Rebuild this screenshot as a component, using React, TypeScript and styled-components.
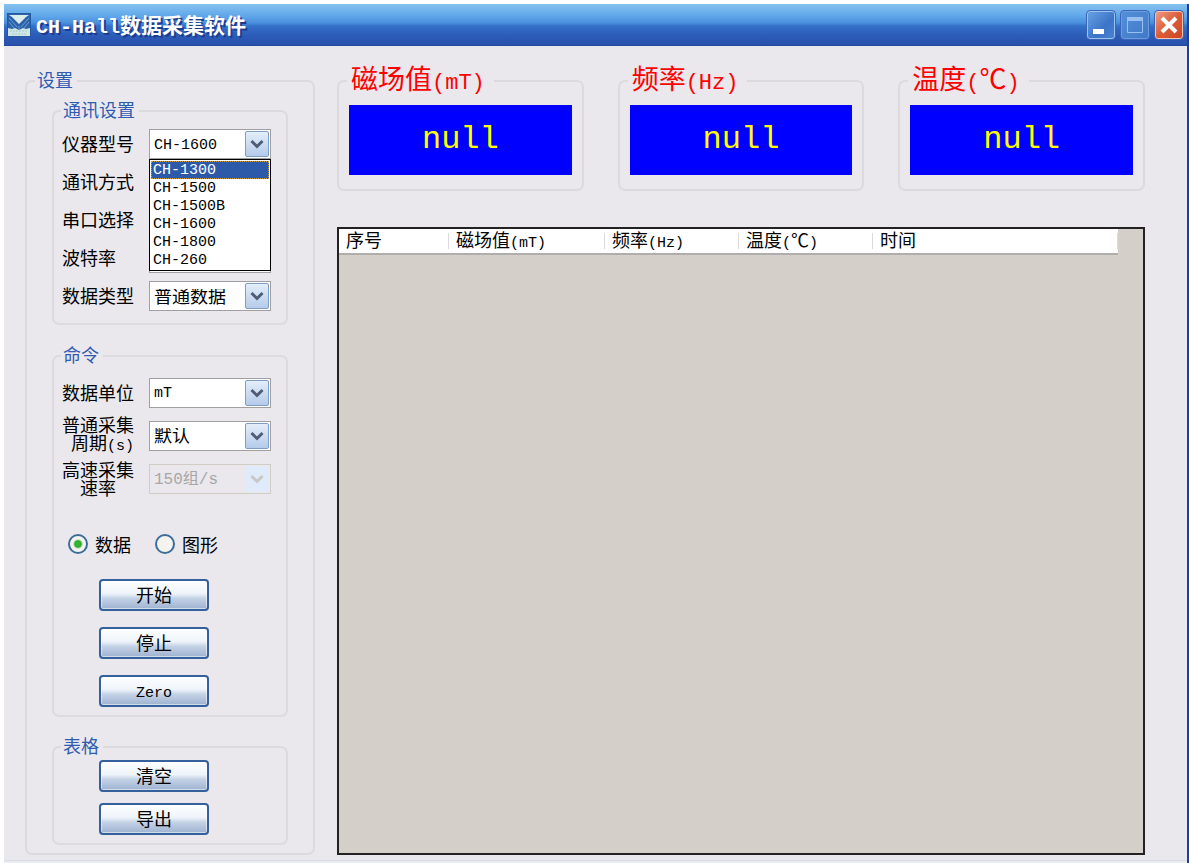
import React, { Fragment, ReactNode, useState } from "react";
import styled, { createGlobalStyle, css } from "styled-components";

const GlobalStyle = createGlobalStyle`
  *, *::before, *::after { box-sizing: border-box; }
  body {
    margin: 0;
    background: #fff;
    color: #000;
    font: 18px/18px "Noto Sans CJK SC", sans-serif;
  }
  button, select, input { font: inherit; color: inherit; margin: 0; }
`;

const mono = css`
  font-family: "Liberation Mono", "Noto Sans CJK SC", monospace;
`;

const Latin = styled.span<{ $size: number }>`
  ${mono}
  font-size: ${(p) => p.$size}px;
  line-height: 1;
`;

/* Chinese text with its ASCII parts set in half-width monospace. */
function Mixed({ text, latin = 15 }: { text: string; latin?: number }) {
  const parts = text.split(/([\x20-\x7e]+)/).filter(Boolean);
  return (
    <>
      {parts.map((part, i) =>
        /^[\x20-\x7e]/.test(part) ? (
          <Latin key={i} $size={latin}>{part}</Latin>
        ) : (
          <Fragment key={i}>{part}</Fragment>
        )
      )}
    </>
  );
}

const Window = styled.div`
  display: flex;
  flex-direction: column;
  min-height: 100vh;
  padding: 4px 0 0 4px;
`;

const Frame = styled.div`
  flex: 1;
  display: flex;
  flex-direction: column;
  border-right: 2px solid #1f3f9c;
  background: #eae8ed;
`;

const TitleBar = styled.header`
  display: flex;
  align-items: center;
  gap: 5px;
  height: 42px;
  padding: 0 3px 0 3px;
  border-bottom: 1px solid #2348a0;
  background: linear-gradient(#86c4ef 0%, #5ea5ea 30%, #4a8fdc 46%, #3470c8 54%, #2c5db8 75%, #2850ac 100%);
`;

const Title = styled.h1`
  flex: 1;
  margin: 0;
  color: #fff;
  font-size: 21px;
  line-height: 24px;
  font-weight: 700;
  text-shadow: 2px 2px 0 #1c3c90;
`;

const Controls = styled.div`
  display: flex;
  gap: 4px;
`;

const ControlButton = styled.button<{ $kind: "plain" | "dim" | "close" }>`
  display: grid;
  place-items: center;
  width: 30px;
  height: 30px;
  padding: 0;
  border: 1px solid #3a66bc;
  border-radius: 4px;
  box-shadow: inset 0 0 0 1px ${(p) =>
    p.$kind === "close" ? "#f4c4b8" : p.$kind === "dim" ? "#6c9cdc" : "#9cc0ec"};
  background: ${(p) =>
    p.$kind === "close"
      ? "linear-gradient(135deg, #eea08c, #dc5c38 50%, #cc4420)"
      : p.$kind === "dim"
      ? "linear-gradient(135deg, #5490d8, #4078c8)"
      : "linear-gradient(135deg, #6aa4e4, #3c74c8 60%, #4c84d0)"};
`;

const Content = styled.main`
  flex: 1;
  display: flex;
  gap: 22px;
  padding: 16px 42px 5px 21px;
`;

const Status = styled.footer`
  height: 4px;
  border-top: 1px solid #d8dde4;
  background: #e9edf2;
`;

const Group = styled.fieldset`
  min-width: 0;
  margin: 0;
  padding: 0 26px 0 26px;
  border: 2px solid #dcdadc;
  border-radius: 7px;
`;

const GroupTitle = styled.legend`
  padding: 0 4px 4px 2px;
  color: #2f5cb0;
  line-height: 18px;
`;

const Sidebar = styled(Group)`
  flex: none;
  width: 290px;
  margin-top: 8px;
  padding: 0 25px 8px 25px;

  & > ${GroupTitle} { margin-left: -17px; }
`;

const Section = styled(Group)<{ $gap: number }>`
  padding: 0 15px 8px 8px;
  margin-top: ${(p) => p.$gap}px;

  & > ${GroupTitle} { margin-left: -1px; }
`;

const Fields = styled.div<{ $row: number; $top: number }>`
  display: grid;
  grid-auto-rows: ${(p) => p.$row}px;
  padding-top: ${(p) => p.$top}px;
`;

const Field = styled.div`
  display: grid;
  grid-template-columns: 72px 1fr;
  gap: 15px;
  align-items: center;
`;

const FieldLabel = styled.label`
  padding-bottom: 2px;
  text-align: center;
  white-space: pre;
`;

const LeftLabel = styled(FieldLabel)`
  text-align: left;
`;

const SelectBox = styled.div`
  position: relative;
`;

const SelectInput = styled.select<{ $size: number }>`
  ${mono}
  display: block;
  width: 100%;
  height: 30px;
  padding: 3px 28px 0 4px;
  border: 1px solid #a0a0a4;
  border-radius: 0;
  outline: 0;
  background: #fff;
  font-size: ${(p) => p.$size}px;
  appearance: none;

  &:disabled {
    border-color: #d0cec4;
    background: #eae8ed;
    color: #a8a6a6;
    opacity: 1;
  }
`;

const ArrowBox = styled.span<{ $off?: boolean }>`
  position: absolute;
  top: 2px;
  right: 2px;
  display: grid;
  place-items: center;
  width: 24px;
  height: 26px;
  border: 1px solid ${(p) => (p.$off ? "#e4ebf5" : "#7f9ec4")};
  border-radius: 2px;
  background: ${(p) => (p.$off ? "#dfeafa" : "linear-gradient(#e4eefb, #b4cbea)")};
  pointer-events: none;
`;

const Options = styled.ul`
  ${mono}
  position: absolute;
  z-index: 2;
  top: 30px;
  left: 0;
  right: 0;
  margin: 0;
  padding: 1px;
  border: 1px solid #000;
  background: #fff;
  font-size: 15px;
  list-style: none;
`;

const Option = styled.li<{ $active: boolean }>`
  height: 18px;
  padding: 2px 2px 0;
  line-height: 16px;
  ${(p) =>
    p.$active &&
    css`
      background: #2c5aa8;
      color: #fff;
      outline: 1px dotted #d0a040;
      outline-offset: -1px;
    `}
`;

const Radios = styled.div`
  display: flex;
  gap: 24px;
  padding: 34px 0 25px 6px;
`;

const RadioLabel = styled.label`
  display: flex;
  align-items: center;
  gap: 7px;
`;

const RadioInput = styled.input`
  width: 20px;
  height: 20px;
  border: 2px solid #3c6c98;
  border-radius: 50%;
  background: #f4f3f0;
  appearance: none;

  &:checked {
    background: radial-gradient(circle, #30b830 0 2px, #28a828 3px, #f4f3f0 5px);
  }
`;

const Buttons = styled.div<{ $gap: number; $top?: number }>`
  display: flex;
  flex-direction: column;
  gap: ${(p) => p.$gap}px;
  padding: ${(p) => p.$top ?? 0}px 0 0 37px;
`;

const PushButton = styled.button`
  width: 110px;
  height: 32px;
  padding: 0 0 3px;
  border: 2px solid #34609c;
  border-radius: 4px;
  background: linear-gradient(#fdfeff 0%, #eef4fa 45%, #c4d2e6 62%, #9eb2d0 100%);
  box-shadow: inset 0 0 0 1px #ffffff80;
  line-height: 20px;
`;

const Work = styled.div`
  flex: 1;
  min-width: 0;
  display: flex;
  flex-direction: column;
  gap: 36px;
`;

const Readouts = styled.div`
  display: grid;
  grid-template-columns: repeat(3, 1fr);
  gap: 34px;
`;

const Readout = styled(Group)`
  padding: 6px 10px 14px 10px;
`;

const ReadoutTitle = styled.legend`
  margin-left: -2px;
  padding: 0 9px 4px 4px;
  color: #f00;
  font-size: 27px;
  line-height: 32px;
`;

const Value = styled.output`
  ${mono}
  display: block;
  background: #00f;
  color: #ff0;
  font-size: 32px;
  line-height: 70px;
  text-align: center;
`;

const ListPanel = styled.div`
  flex: 1;
  border: 2px solid #222;
  background: #d4cfc8;
`;

const Table = styled.table`
  width: calc(100% - 25px);
  border-collapse: separate;
  border-spacing: 0;
  border-bottom: 2px solid #b0aeac;
  background: #fff;
  table-layout: fixed;
`;

const HeadCell = styled.th<{ $width?: number }>`
  width: ${(p) => (p.$width ? `${p.$width}px` : "auto")};
  height: 23px;
  padding: 0 0 2px 7px;
  background: linear-gradient(#dcdadc, #dcdadc) right center / 1px 16px no-repeat;
  font-weight: 400;
  text-align: left;
  vertical-align: baseline;
  line-height: 21px;
  white-space: nowrap;
`;

function Logo() {
  return (
    <svg width="24" height="24" viewBox="0 0 24 24" aria-hidden="true">
      <rect x="0.5" y="0.5" width="23" height="23" fill="#2c62ac" stroke="#2458a0" />
      <path d="M2 2h20l-3 2-7 7-7-7z" fill="#dcecec" />
      <path d="M1 15l4 1 3-1 4 2 4-2 3 1 4-1v8H1z" fill="#cfe6e4" />
      <path d="M2 5l8 9M2 9l5 6M22 5l-8 9M22 9l-5 6M12 13v4" stroke="#6ca0cc" />
      <path d="M3 18h18M5 21h14" stroke="#a4ccd0" strokeDasharray="2 1" />
    </svg>
  );
}

function Arrow({ off }: { off?: boolean }) {
  return (
    <ArrowBox $off={off}>
      <svg width="14" height="10" viewBox="0 0 14 10" aria-hidden="true">
        <path d="M1.500 2l5.500 5.500L12.500 2" fill="none" stroke={off ? "#c8c8c4" : "#505c74"} strokeWidth="3" />
      </svg>
    </ArrowBox>
  );
}

type FieldProps = {
  id: string;
  label: string;
  options: string[];
  value?: string;
  size?: number;
  off?: boolean;
  left?: boolean;
  children?: ReactNode;
};

function SelectField({ id, label, options, value, size = 15, off, left, children }: FieldProps) {
  const Label = left ? LeftLabel : FieldLabel;
  return (
    <Field>
      <Label htmlFor={id}><Mixed text={label} /></Label>
      <SelectBox>
        <SelectInput id={id} $size={size} disabled={off} defaultValue={value ?? options[0]}>
          {options.map((o) => <option key={o}>{o}</option>)}
        </SelectInput>
        <Arrow off={off} />
        {children}
      </SelectBox>
    </Field>
  );
}

const models = ["CH-1300", "CH-1500", "CH-1500B", "CH-1600", "CH-1800", "CH-260"];
const readouts = ["磁场值(mT)", "频率(Hz)", "温度(℃)"];
const columns: { name: string; width?: number }[] = [
  { name: "序号", width: 110 },
  { name: "磁场值(mT)", width: 156 },
  { name: "频率(Hz)", width: 134 },
  { name: "温度(℃)", width: 134 },
  { name: "时间" },
];

export default function App() {
  const [view, setView] = useState("数据");

  return (
    <Window>
      <GlobalStyle />
      <Frame>
        <TitleBar>
          <Logo />
          <Title><Mixed text="CH-Hall数据采集软件" latin={20} /></Title>
          <Controls>
            <ControlButton $kind="plain" aria-label="最小化">
              <svg width="20" height="20" aria-hidden="true"><path d="M2 14h11v5H2z" fill="#fff" /></svg>
            </ControlButton>
            <ControlButton $kind="dim" aria-label="最大化">
              <svg width="20" height="20" aria-hidden="true">
                <path d="M2.500 2.500h15v15h-15z" fill="none" stroke="#98c0ee" />
                <path d="M2 2h16v4H2z" fill="#98c0ee" />
              </svg>
            </ControlButton>
            <ControlButton $kind="close" aria-label="关闭">
              <svg width="20" height="20" aria-hidden="true">
                <path d="M3 3l14 14M17 3L3 17" stroke="#fff" strokeWidth="4" />
              </svg>
            </ControlButton>
          </Controls>
        </TitleBar>

        <Content>
          <Sidebar>
            <GroupTitle>设置</GroupTitle>

            <Section $gap={8}>
              <GroupTitle>通讯设置</GroupTitle>
              <Fields $row={38} $top={3}>
                <SelectField id="model" label="仪器型号" options={models} value="CH-1600" left>
                  <Options role="listbox" aria-label="仪器型号">
                    {models.map((m, i) => (
                      <Option key={m} role="option" aria-selected={i === 0} $active={i === 0}>{m}</Option>
                    ))}
                  </Options>
                </SelectField>
                <SelectField id="link" label="通讯方式" options={[""]} left />
                <SelectField id="port" label="串口选择" options={[""]} left />
                <SelectField id="baud" label="波特率" options={[""]} left />
                <SelectField id="type" label="数据类型" options={["普通数据"]} size={18} left />
              </Fields>
            </Section>

            <Section $gap={20}>
              <GroupTitle>命令</GroupTitle>
              <Fields $row={43} $top={4}>
                <SelectField id="unit" label="数据单位" options={["mT"]} left />
                <SelectField id="period" label={"普通采集\n 周期(s)"} options={["默认"]} size={18} />
                <SelectField id="rate" label={"高速采集\n速率"} options={["150组/s"]} size={16} off />
              </Fields>
              <Radios>
                {["数据", "图形"].map((name) => (
                  <RadioLabel key={name}>
                    <RadioInput
                      type="radio"
                      name="view"
                      checked={view === name}
                      onChange={() => setView(name)}
                    />
                    {name}
                  </RadioLabel>
                ))}
              </Radios>
              <Buttons $gap={16}>
                <PushButton>开始</PushButton>
                <PushButton>停止</PushButton>
                <PushButton><Mixed text="Zero" /></PushButton>
              </Buttons>
            </Section>

            <Section $gap={19}>
              <GroupTitle>表格</GroupTitle>
              <Buttons $gap={11} $top={2}>
                <PushButton>清空</PushButton>
                <PushButton>导出</PushButton>
              </Buttons>
            </Section>
          </Sidebar>

          <Work>
            <Readouts>
              {readouts.map((name) => (
                <Readout key={name}>
                  <ReadoutTitle><Mixed text={name} latin={22} /></ReadoutTitle>
                  <Value>null</Value>
                </Readout>
              ))}
            </Readouts>
            <ListPanel>
              <Table>
                <thead>
                  <tr>
                    {columns.map((c) => (
                      <HeadCell key={c.name} scope="col" $width={c.width}><Mixed text={c.name} /></HeadCell>
                    ))}
                  </tr>
                </thead>
              </Table>
            </ListPanel>
          </Work>
        </Content>
        <Status />
      </Frame>
    </Window>
  );
}
